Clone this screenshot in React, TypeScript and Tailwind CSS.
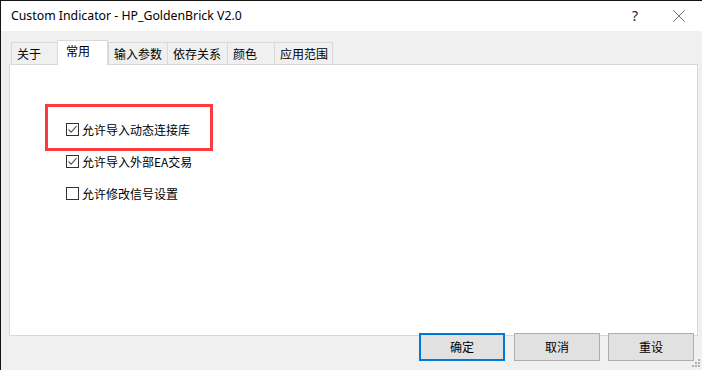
import { X } from 'lucide-react'

const cjk = "font-['Noto_Sans_CJK_SC','Noto_Sans',sans-serif]"

const tabs = [
  { label: '关于', w: 'w-[46px]' },
  { label: '常用', w: 'w-[51px]', active: true },
  { label: '输入参数', w: 'w-[59px]' },
  { label: '依存关系', w: 'w-[60px]' },
  { label: '颜色', w: 'w-[47px]' },
  { label: '应用范围', w: 'w-[59px]' },
]

function Check({ checked }: { checked?: boolean }) {
  return (
    <span className="flex h-[13px] w-[13px] shrink-0 items-center justify-center border border-[#333333] bg-white">
      {checked && (
        <svg width="11" height="11" viewBox="0 0 11 11" fill="none">
          <path d="M1.5 5.5 L4.2 8.2 L9.5 2.2" stroke="#555555" strokeWidth="1.2" />
        </svg>
      )}
    </span>
  )
}

function Option({ label, checked }: { label: string; checked?: boolean }) {
  return (
    <div className="flex h-[13px] items-center gap-[3px]">
      <Check checked={checked} />
      <span className="whitespace-nowrap text-[12px] leading-none text-black">{label}</span>
    </div>
  )
}

function Btn({ label, primary }: { label: string; primary?: boolean }) {
  return (
    <button
      className={
        primary
          ? 'flex h-[28px] w-[86px] items-center justify-center border-2 border-[#0078d7] bg-[#e1e1e1] text-[12px] text-black'
          : 'flex h-[28px] w-[86px] items-center justify-center border border-[#adadad] bg-[#e1e1e1] text-[12px] text-black'
      }
    >
      {label}
    </button>
  )
}

export default function App() {
  return (
    <div className={`relative flex h-[370px] w-[702px] flex-col overflow-hidden border-l border-t border-[#141414] bg-[#f0f0f0] ${cjk}`}>
      {/* title bar */}
      <div className="flex h-[30px] shrink-0 items-center bg-white pl-[10px] pr-[12px]">
        <span className="font-['Noto_Sans',sans-serif] text-[12.3px] leading-none text-black">
          Custom Indicator - HP_GoldenBrick V2.0
        </span>
        <span className="ml-auto mr-[30px] font-['Noto_Sans',sans-serif] text-[14px] leading-none text-[#222]">?</span>
        <X size={22} strokeWidth={0.7} className="text-[#222]" />
      </div>

      {/* body */}
      <div className="flex flex-1 flex-col pl-[8px] pt-[9px]">
        <div className="flex h-[24px] items-end pl-[2px]">
          {tabs.map((t) =>
            t.active ? (
              <div
                key={t.label}
                className={`relative z-10 -mb-px flex h-[25px] ${t.w} items-start border-x border-t border-[#d9d9d9] bg-white pl-[8px] pt-[4px] text-[12px] leading-none text-black`}
              >
                {t.label}
              </div>
            ) : (
              <div
                key={t.label}
                className={`flex h-[22px] ${t.w} items-center border-l border-t border-[#d9d9d9] pl-[5px] text-[12px] leading-none text-black last:border-r`}
              >
                {t.label}
              </div>
            )
          )}
        </div>

        <div className="h-[272px] w-[689px] border border-[#d9d9d9] bg-white pl-[35px] pt-[39px]">
          <div className="h-[47px] w-[168px] border-[3px] border-[#fa3c3c] pl-[18px] pt-[16px]">
            <Option label="允许导入动态连接库" checked />
          </div>
          <div className="ml-[21px] mt-[4px] flex flex-col gap-[19px]">
            <Option label="允许导入外部EA交易" checked />
            <Option label="允许修改信号设置" />
          </div>
        </div>

        <div className="-mt-[3px] flex pl-[410px]">
          <Btn label="确定" primary />
          <div className="ml-[9px]">
            <Btn label="取消" />
          </div>
          <div className="ml-[8px]">
            <Btn label="重设" />
          </div>
        </div>
      </div>

      {/* size grip */}
      <svg className="absolute bottom-[2px] right-[2px]" width="10" height="10" viewBox="0 0 10 10">
        {[
          [8, 0],
          [8, 3],
          [5, 3],
          [8, 6],
          [5, 6],
          [2, 6],
        ].map(([x, y]) => (
          <rect key={`${x}-${y}`} x={x} y={y + 1} width="2" height="2" fill="#b0b0b0" />
        ))}
      </svg>
    </div>
  )
}
